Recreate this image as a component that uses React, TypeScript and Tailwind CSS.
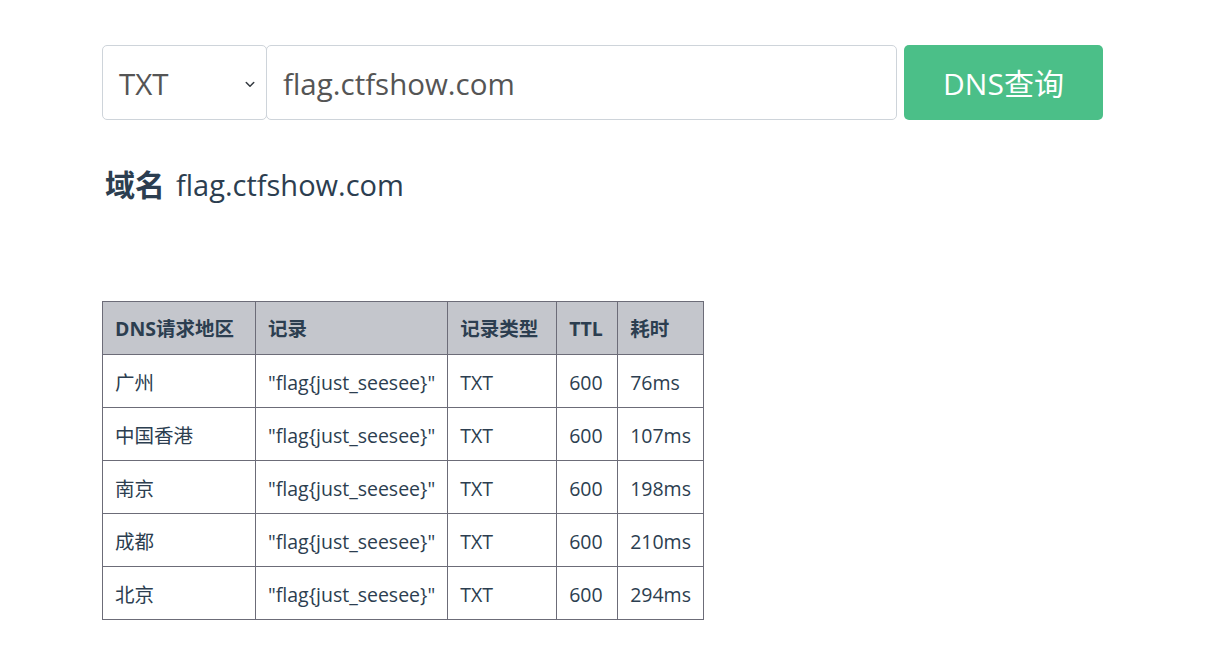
import React from "react";

const rows = [
  { region: "广州", time: "76ms" },
  { region: "中国香港", time: "107ms" },
  { region: "南京", time: "198ms" },
  { region: "成都", time: "210ms" },
  { region: "北京", time: "294ms" },
];

const font = { fontFamily: '"Open Sans", "Noto Sans CJK SC", sans-serif' };

export default function App() {
  return (
    <div className="w-[1219px] h-[646px] bg-white text-[#2c3e50] overflow-hidden" style={font}>
      <div className="ml-[102px] w-[1001px] pt-[45px]">
        <div className="flex h-[75px]">
          <div className="w-[165px] h-full flex items-center justify-between border border-[#ced4da] rounded-[5px] pl-[16px] pr-[10px] pt-[3px] text-[29.5px] text-[#555]">
            <span>TXT</span>
            <svg width="12" height="12" viewBox="0 0 16 16" fill="none" stroke="#343a40" strokeWidth="2" strokeLinecap="round" strokeLinejoin="round">
              <path d="M3 6l5 5 5-5" />
            </svg>
          </div>
          <div className="w-[631px] h-full flex items-center border border-[#ced4da] rounded-[5px] -ml-px pl-[16px] pt-[3px] text-[29.5px] text-[#555]">
            flag.ctfshow.com
          </div>
          <button className="ml-[7px] w-[199px] h-full bg-[#4bbf88] rounded-[5px] pt-[2px] text-white text-[30px] flex items-center justify-center">
            DNS查询
          </button>
        </div>
        <div className="mt-[44px] flex items-baseline gap-[11px] pl-[3px] text-[30px] leading-[42px]">
          <span className="font-bold">域名</span>
          <span className="text-[29px]">flag.ctfshow.com</span>
        </div>
        <table className="mt-[95px] border-collapse text-[19.5px] text-[#2c3e50]">
          <thead>
            <tr className="bg-[#c4c6cc] h-[53px] text-left">
              <th className="w-[153px] border border-[#6c6c78] px-[12px] pt-[2px] font-bold">DNS请求地区</th>
              <th className="w-[192px] border border-[#6c6c78] px-[12px] pt-[2px] font-bold">记录</th>
              <th className="w-[109px] border border-[#6c6c78] px-[12px] pt-[2px] font-bold">记录类型</th>
              <th className="w-[61px] border border-[#6c6c78] px-[12px] pt-[2px] font-bold">TTL</th>
              <th className="w-[86px] border border-[#6c6c78] px-[12px] pt-[2px] font-bold">耗时</th>
            </tr>
          </thead>
          <tbody>
            {rows.map((r) => (
              <tr key={r.region} className="h-[53px]">
                <td className="border border-[#6c6c78] px-[12px] pt-[3px]">{r.region}</td>
                <td className="border border-[#6c6c78] px-[12px] pt-[3px]">"flag{"{"}just_seesee{"}"}"</td>
                <td className="border border-[#6c6c78] px-[12px] pt-[3px]">TXT</td>
                <td className="border border-[#6c6c78] px-[12px] pt-[3px]">600</td>
                <td className="border border-[#6c6c78] px-[12px] pt-[3px]">{r.time}</td>
              </tr>
            ))}
          </tbody>
        </table>
      </div>
    </div>
  );
}
